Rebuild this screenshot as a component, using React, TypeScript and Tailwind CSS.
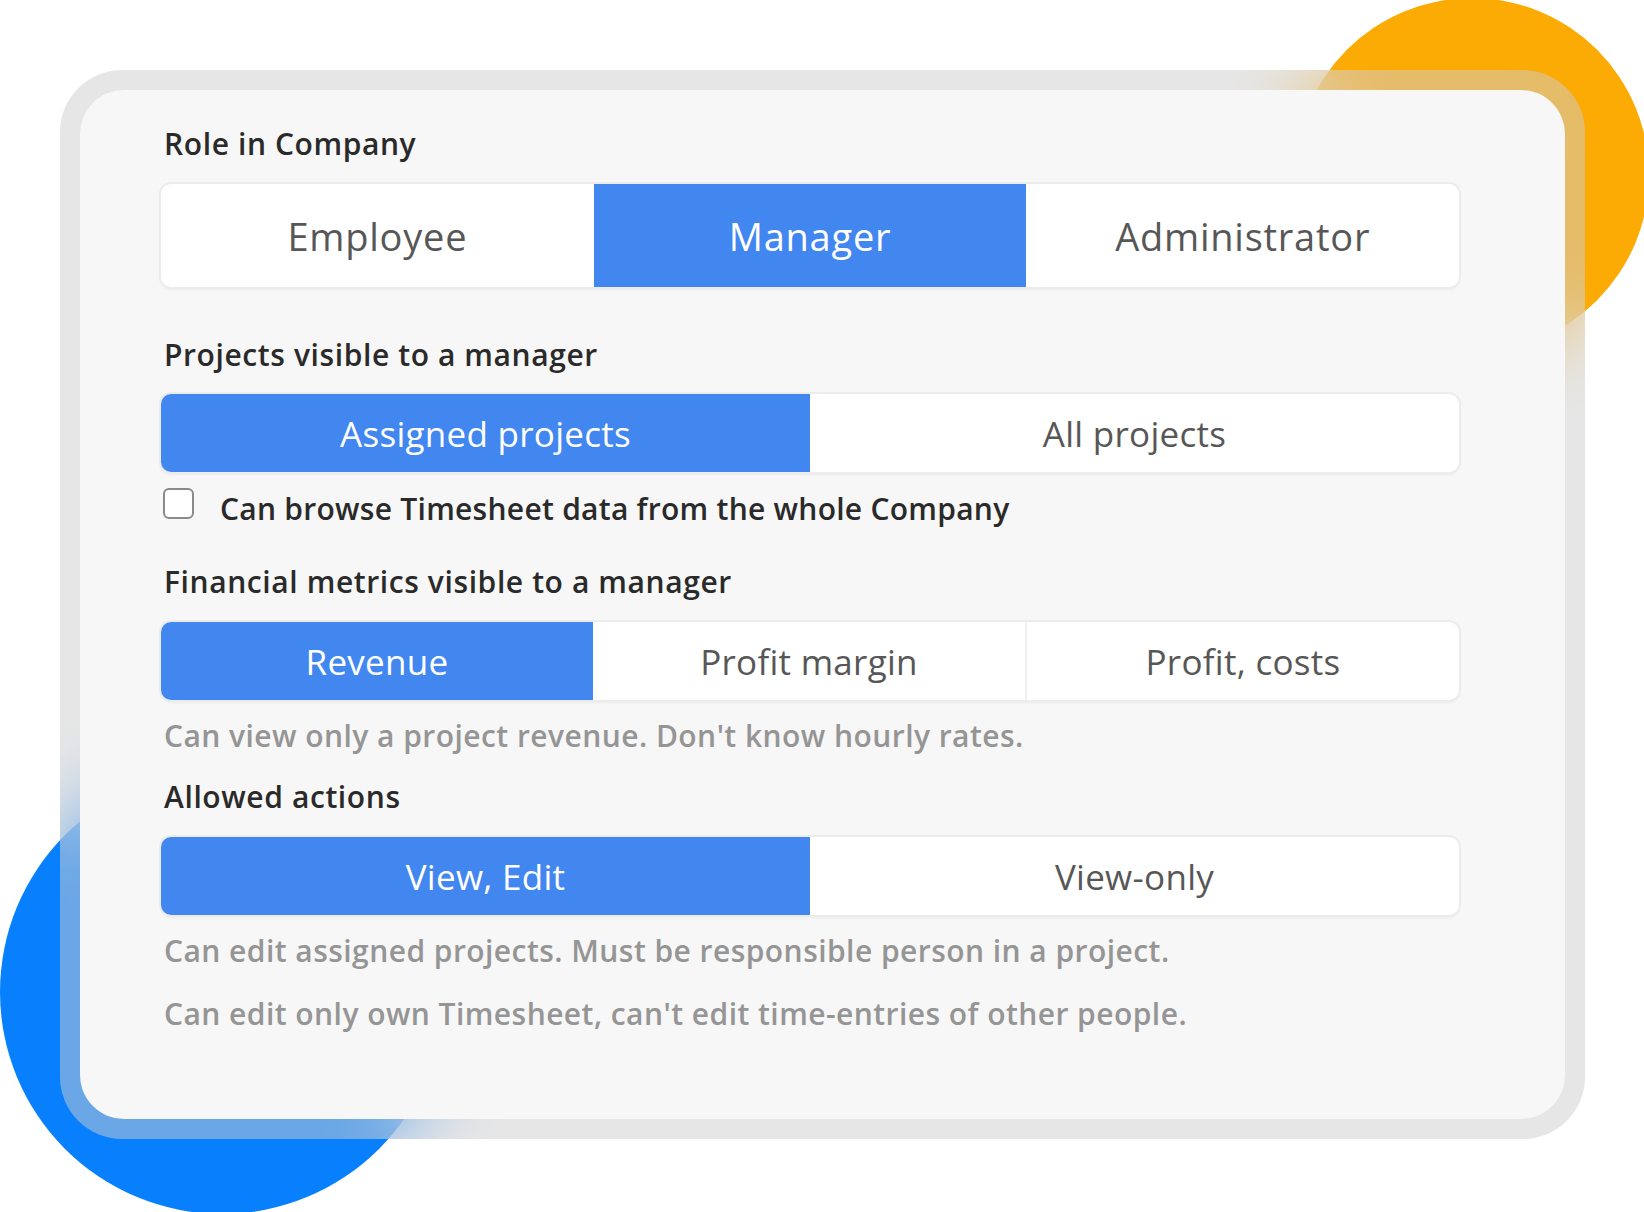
import clsx from "clsx";

type SegProps = {
  options: string[];
  active: number;
  big?: boolean;
};

const Segmented = ({ options, active, big }: SegProps) => {
  const last = options.length - 1;
  return (
    <div
      className={clsx(
        "flex w-[1298px] rounded-[10px] bg-white shadow-[0_0_0_2px_#ececec,0_3px_3px_rgba(0,0,0,0.05)]",
        big ? "h-[103px] text-[38px] tracking-[0.02em]" : "h-[78px] text-[35px] tracking-[0.008em]"
      )}
    >
      {options.map((opt, i) => (
        <div
          key={opt}
          className={clsx(
            "flex flex-1 items-center justify-center leading-none",
            i === active
              ? "bg-[#4287ef] font-medium text-white"
              : "font-normal text-[#575757]",
            i === 0 && "rounded-l-[10px]",
            i === last && "rounded-r-[10px]",
            i > 0 && i !== active && i - 1 !== active && "border-l-2 border-[#f0f0f0]"
          )}
        >
          {opt}
        </div>
      ))}
    </div>
  );
};

const Label = ({ children, className }: { children: string; className?: string }) => (
  <p
    className={clsx(
      "ml-[3px] text-[30px] font-semibold leading-[30px] tracking-[0.02em] text-[#2a2a2a]",
      className
    )}
  >
    {children}
  </p>
);

const Help = ({ children, className }: { children: string; className?: string }) => (
  <p
    className={clsx(
      "ml-[3px] text-[30px] font-semibold leading-[30px] tracking-[0.015em] text-[#959595]",
      className
    )}
  >
    {children}
  </p>
);

const App = () => {
  return (
    <div className="relative h-[1212px] w-[1644px] overflow-hidden bg-white font-['Open_Sans','Noto_Sans',sans-serif]">
      {/* decorative circles behind the card */}
      <div className="absolute left-[1295px] top-[-2px] h-[354px] w-[354px] rounded-full bg-[#fcaa04]" />
      <div className="absolute left-0 top-[770px] h-[444px] w-[444px] rounded-full bg-[#0880fe]" />

      <div className="relative z-10 ml-[60px] mt-[70px] h-[1069px] w-[1525px] rounded-[62px] bg-[rgba(205,205,205,0.5)] p-[20px] backdrop-blur-2xl">
        <div className="h-full rounded-[44px] bg-[#f7f7f7] pl-[81px] pt-[39px]">
          <Label>Role in Company</Label>
          <div className="mt-[25px]">
            <Segmented options={["Employee", "Manager", "Administrator"]} active={1} big />
          </div>

          <Label className="mt-[53px]">Projects visible to a manager</Label>
          <div className="mt-[24px]">
            <Segmented options={["Assigned projects", "All projects"]} active={0} />
          </div>

          <div className="ml-[2px] mt-[16px] flex items-start gap-[23px]">
            <span className="h-[31px] w-[31px] rounded-[6px] border-2 border-[#8a8a8a] bg-white" />
            <Label className="ml-0 mt-[6px] tracking-[0.009em]">
              Can browse Timesheet data from the whole Company
            </Label>
          </div>

          <Label className="mt-[43px]">Financial metrics visible to a manager</Label>
          <div className="mt-[25px]">
            <Segmented options={["Revenue", "Profit margin", "Profit, costs"]} active={0} />
          </div>
          <Help className="mt-[21px]">Can view only a project revenue. Don't know hourly rates.</Help>

          <Label className="mt-[31px]">Allowed actions</Label>
          <div className="mt-[25px]">
            <Segmented options={["View, Edit", "View-only"]} active={0} />
          </div>
          <Help className="mt-[21px]">Can edit assigned projects. Must be responsible person in a project.</Help>
          <Help className="mt-[33px]">Can edit only own Timesheet, can't edit time-entries of other people.</Help>
        </div>
      </div>
    </div>
  );
};

export default App;
